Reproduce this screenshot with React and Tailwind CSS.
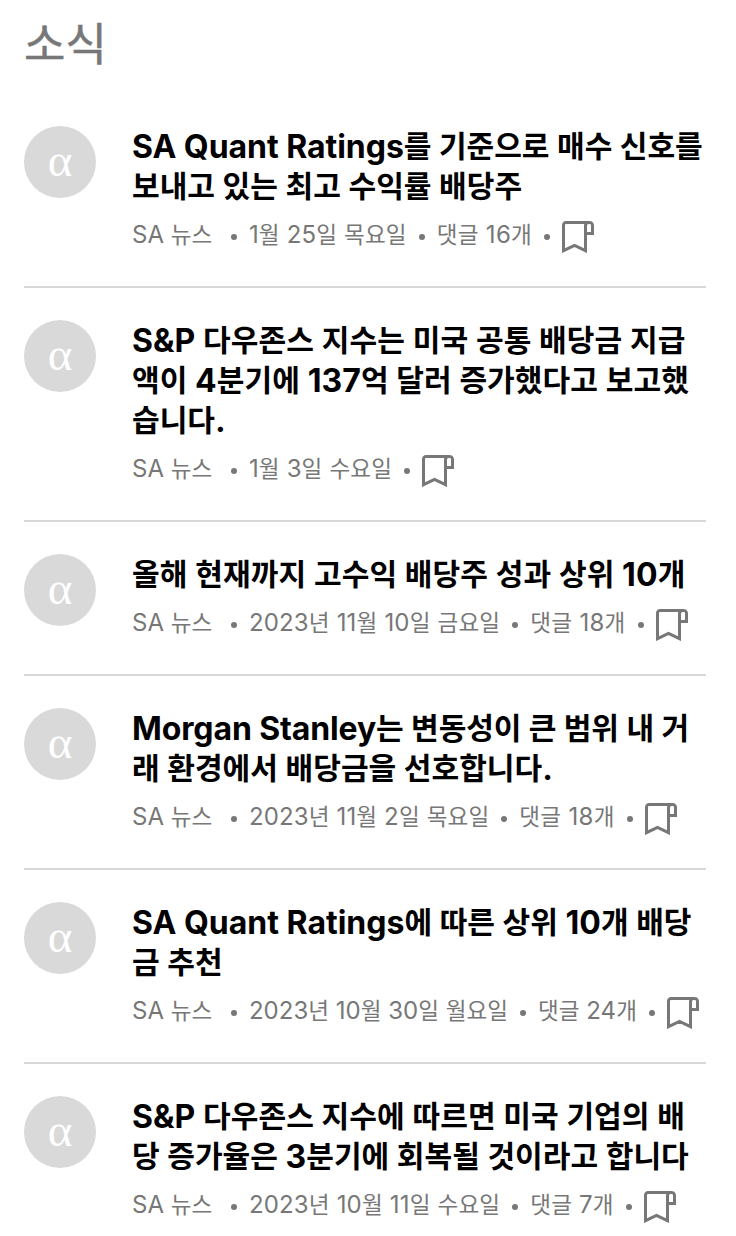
import React from 'react';

const news = [
  {
    lines: [
      { text: 'SA Quant Ratings를 기준으로 매수 신호를', className: 'tracking-[-0.04px]' },
      { text: '보내고 있는 최고 수익률 배당주' },
    ],
    date: '1월 25일 목요일',
    dateClass: 'tracking-[0.15px]',
    comments: '댓글 16개',
    commentsClass: 'tracking-[0.3px]',
  },
  {
    lines: [
      { text: 'S&P 다우존스 지수는 미국 공통 배당금 지급', className: 'tracking-[0.08px]' },
      { text: '액이 4분기에 137억 달러 증가했다고 보고했', className: 'tracking-[0.06px]' },
      { text: '습니다.' },
    ],
    date: '1월 3일 수요일',
    dateClass: 'tracking-[0.15px]',
  },
  {
    lines: [{ text: '올해 현재까지 고수익 배당주 성과 상위 10개', className: 'tracking-[0.08px]' }],
    date: '2023년 11월 10일 금요일',
    dateClass: 'tracking-[0.17px]',
    comments: '댓글 18개',
    commentsClass: 'tracking-[0.3px]',
  },
  {
    lines: [
      { text: 'Morgan Stanley는 변동성이 큰 범위 내 거', className: 'tracking-[-0.12px]' },
      { text: '래 환경에서 배당금을 선호합니다.' },
    ],
    date: '2023년 11월 2일 목요일',
    dateClass: 'tracking-[0.14px]',
    comments: '댓글 18개',
    commentsClass: 'tracking-[0.3px]',
  },
  {
    lines: [
      { text: 'SA Quant Ratings에 따른 상위 10개 배당' },
      { text: '금 추천' },
    ],
    date: '2023년 10월 30일 월요일',
    dateClass: 'tracking-[0.02px]',
    comments: '댓글 24개',
  },
  {
    lines: [
      { text: 'S&P 다우존스 지수에 따르면 미국 기업의 배', className: 'tracking-[0.06px]' },
      { text: '당 증가율은 3분기에 회복될 것이라고 합니다' },
    ],
    date: '2023년 10월 11일 수요일',
    dateClass: 'tracking-[0.17px]',
    comments: '댓글 7개',
    commentsClass: 'tracking-[0.15px]',
  },
];

// Hangul runs are set a little smaller than the Latin text around them
const Mixed = ({ text, className }) =>
  text.split(/([가-힣]+)/).map((part, i) =>
    i % 2 ? (
      <span key={i} className={`text-[0.94em] leading-none ${className || ''}`}>{part}</span>
    ) : (
      part
    )
  );

const Dot = () => <span className="size-1.5 shrink-0 rounded-full bg-[#777]" />;

const BookmarkIcon = () => (
  <svg className="size-8 shrink-0" viewBox="0 0 32 32" fill="none" stroke="#777" strokeWidth="3">
    <path d="M28 1.5H4a2.5 2.5 0 0 0-2.5 2.5v25.7l11-5.4 11 5.4V4.5c0-1.7 1.3-3 3-3h1.2a2.8 2.8 0 0 1 2.8 2.8v8.2h-7" />
  </svg>
);

const NewsItem = ({ item }) => (
  <article className="flex gap-9 border-b-2 border-[#d9d9d9] pb-[33px] mb-8">
    <div className="flex size-[72px] shrink-0 items-center justify-center rounded-full bg-[#d9d9d9]">
      <span className="-mt-1 font-['Liberation_Serif',serif] text-[47px] leading-none text-white">α</span>
    </div>
    <div className="whitespace-nowrap">
      <h2 className="pt-px text-[32px] leading-10 font-bold text-black">
        {item.lines.map(({ text, className }) => (
          <span key={text} className={`block h-10 ${className || ''}`}>
            <Mixed text={text} className="align-[1px]" />
          </span>
        ))}
      </h2>
      <div className="mt-3.5 flex h-8 items-center text-2xl leading-8 text-[#777]">
        <span className="mr-[19px] -mt-1"><Mixed text="SA 뉴스" /></span>
        <Dot />
        <span className={`ml-[11.7px] mr-3 -mt-1 ${item.dateClass}`}><Mixed text={item.date} /></span>
        <Dot />
        {item.comments && (
          <>
            <span className={`mx-3 -mt-1 ${item.commentsClass || ''}`}><Mixed text={item.comments} /></span>
            <Dot />
          </>
        )}
        <span className="ml-3"><BookmarkIcon /></span>
      </div>
    </div>
  </article>
);

const App = () => (
  <div className="h-[1236px] overflow-hidden bg-white px-6 pt-5 pr-[30px] font-[Inter,'Noto_Sans_CJK_KR',sans-serif]">
    <h1 className="mb-[50px] h-14 text-[45px] leading-[50px] text-[#777] [-webkit-text-stroke:0.5px_#777]">소식</h1>
    {news.map((item) => (
      <NewsItem key={item.date} item={item} />
    ))}
  </div>
);

export default App;
